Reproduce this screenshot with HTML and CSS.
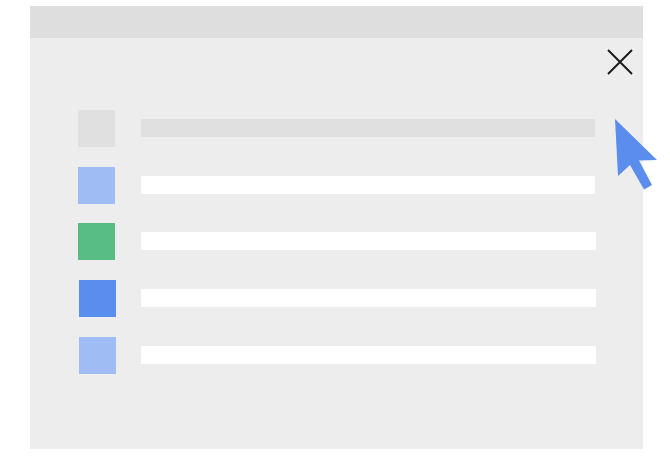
FILE: index.html
```html
<!DOCTYPE html>
<html lang="en">
<head>
  <meta charset="UTF-8">
  <title>Dialog list placeholder</title>
  <link rel="stylesheet" href="styles.css">
</head>
<body>

  <div class="window">
    <div class="title-bar"></div>

    <svg class="close-icon" width="26" height="26" viewBox="0 0 26 26">
      <path d="M1 1 L25 25 M25 1 L1 25" fill="none" stroke="#1a1a1a" stroke-width="1.9"/>
    </svg>

    <div class="list">
      <div class="row">
        <div class="swatch swatch-grey"></div>
        <div class="bar bar-grey"></div>
      </div>
      <div class="row">
        <div class="swatch swatch-light"></div>
        <div class="bar"></div>
      </div>
      <div class="row row-wide">
        <div class="swatch swatch-green"></div>
        <div class="bar"></div>
      </div>
      <div class="row row-wide">
        <div class="swatch swatch-blue swatch-shift"></div>
        <div class="bar"></div>
      </div>
      <div class="row row-wide">
        <div class="swatch swatch-light swatch-shift"></div>
        <div class="bar"></div>
      </div>
    </div>

    <svg class="cursor" width="44" height="74" viewBox="0 0 44 74">
      <path d="M1 0 L43 41 L25 41.5 L38 66 L30 70.5 L16 46 L4 57 Z" fill="#5b8def"/>
    </svg>
  </div>

</body>
</html>
```

FILE: styles.css
```css
* {
  margin: 0;
  padding: 0;
  box-sizing: border-box;
}

body {
  background: #fff;
  height: 462px;
  overflow: hidden;
}

.window {
  position: relative;
  width: 613px;
  height: 443px;
  margin: 6px 0 0 30px;
  background: #ededed;
}

.title-bar {
  height: 32px;
  background: #dedede;
}

.close-icon {
  position: absolute;
  top: 43px;
  left: 577px;
}

.cursor {
  position: absolute;
  top: 113px;
  left: 584px;
}

.list {
  display: flex;
  flex-direction: column;
  gap: 19.7px;
  padding: 72px 48px 0 48px;
}

.row {
  display: flex;
  align-items: center;
  gap: 26px;
}

.row-wide {
  margin-right: -1px;
}

.swatch {
  width: 37px;
  height: 37px;
}

.swatch-shift {
  margin: 0 -1px 0 1px;
}

.swatch-grey {
  background: #e0e0e0;
}

.swatch-light {
  background: #9fbcf5;
}

.swatch-green {
  background: #57bd85;
}

.swatch-blue {
  background: #5b8def;
}

.bar {
  flex: 1;
  height: 18px;
  margin-bottom: 1px;
  background: #fff;
}

.bar-grey {
  background: #e0e0e0;
}
```
